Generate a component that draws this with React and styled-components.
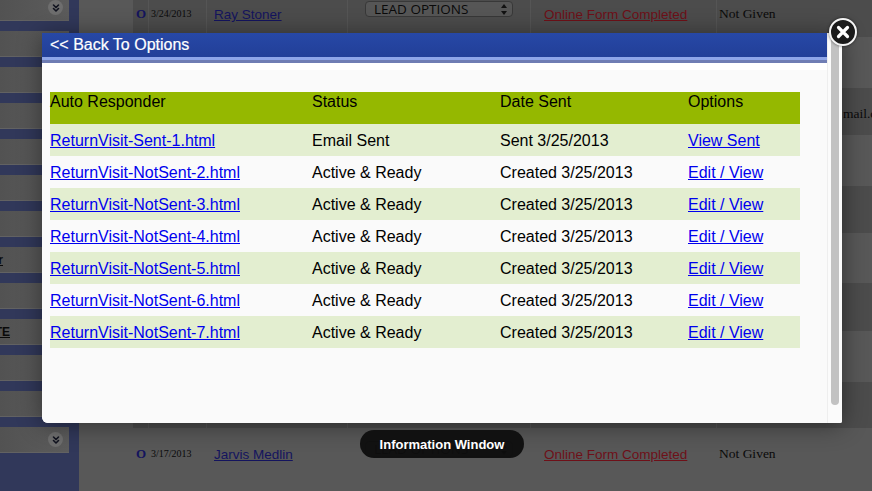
import React from 'react';
import styled, { createGlobalStyle } from 'styled-components';
import { ChevronsDown } from 'lucide-react';

const GlobalStyle = createGlobalStyle`
  html, body {
    margin: 0;
    padding: 0;
    height: 100%;
    overflow: hidden;
    font-family: "Liberation Sans", Arial, sans-serif;
  }
`;

// the page behind the popup is drawn in its dimmed colours
const Page = styled.div`
  position: relative;
  display: flex;
  width: 872px;
  height: 491px;
  overflow: hidden;
  background: #585858;
`;

const Sidebar = styled.div`
  flex: 0 0 79px;
  display: flex;
  flex-direction: column;
  gap: 10px;
  margin-top: -5px;
  padding-right: 10px;
  box-sizing: border-box;
  height: 500px;
  background: #31385a;
`;

const NavItem = styled.div`
  flex: 0 0 25px;
  display: flex;
  align-items: center;
  justify-content: space-between;
  padding-right: 6px;
  background: linear-gradient(to right, #525252, #5c5c5c);
  border-bottom: 1px solid #626262;
`;

const NavLabel = styled.a`
  display: flex;
  justify-content: flex-end;
  width: ${(p) => p.$end}px;
  font-size: 12px;
  font-weight: bold;
  color: #0a0a0a;
  text-decoration: underline;
`;

const NavToggle = styled.span`
  display: flex;
  align-items: center;
  justify-content: center;
  width: 15px;
  height: 15px;
  margin-left: auto;
  border-radius: 50%;
  background: #6e6e6e;
  color: #11131f;
`;

const Main = styled.div`
  flex: 1;
  display: flex;
  flex-direction: column;
  margin-top: -12px;
  padding-left: 54px;
`;

const Row = styled.div`
  flex: 0 0 ${(p) => p.$h}px;
  display: grid;
  grid-template-columns: 15px 57px 140px 182px 185px 1fr;
  column-gap: 1px;
  background: ${(p) => (p.$dark ? '#555555' : 'transparent')};
`;

const Cell = styled.div`
  padding-top: 19px;
  box-sizing: border-box;
  overflow: visible;
  white-space: nowrap;
  background: ${(p) => (p.$dark ? '#4c4c4c' : 'transparent')};
`;

const Marker = styled(Cell)`
  padding-left: 3px;
  font: bold 13px/14px "Liberation Serif", serif;
  color: #14145e;
`;

const DateCell = styled(Cell)`
  padding-left: 2px;
  font: 10px/14px "Liberation Serif", serif;
  color: #0a0a0a;
`;

const NameCell = styled(Cell)`
  padding: 19px 0 0 7px;
  font: 13.5px/16px "Liberation Sans", sans-serif;
`;

const SelectCell = styled(Cell)`
  padding: 13px 0 0 17px;
`;

const LeadSelect = styled.div`
  display: flex;
  align-items: center;
  justify-content: space-between;
  width: 148px;
  height: 16px;
  padding: 0 5px 0 8px;
  box-sizing: border-box;
  border: 1px solid #383838;
  border-radius: 4px;
  font: 13.5px/16px "Open Sans", sans-serif;
  color: #0a0a0a;
  background: #565656;
`;

const StatusCell = styled(Cell)`
  padding: 19px 0 0 13px;
  font: 13.5px/16px "Liberation Sans", sans-serif;
`;

const LastCell = styled(Cell)`
  padding: 18px 0 0 2px;
  font: 13.5px/15px "Liberation Serif", serif;
  color: #0a0a0a;
`;

const EmailText = styled.span`
  margin-left: 124px;
`;

const NameLink = styled.a`
  color: #14145e;
  text-decoration: underline;
`;

const StatusLink = styled.a`
  color: #6e1018;
  text-decoration: underline;
`;

const Modal = styled.div`
  position: absolute;
  left: 42px;
  top: 33px;
  width: 800px;
  height: 390px;
  display: flex;
  background: #fafafa;
  border-radius: 0 0 2px 6px;
  box-shadow: 0 2px 24px rgba(0, 0, 0, 0.45);
  overflow: hidden;
`;

const ModalBody = styled.div`
  flex: 1;
  display: flex;
  flex-direction: column;
`;

const ModalHeader = styled.div`
  height: 24px;
  padding-left: 8px;
  box-sizing: border-box;
  font-size: 16px;
  line-height: 23px;
  color: #fff;
  -webkit-text-stroke: 0.2px #fff;
  background: linear-gradient(to bottom, #2748a6, #223f98);
`;

const HeaderStripe = styled.div`
  height: 6px;
  background: linear-gradient(to bottom, #8ea5e8 50%, #6f7db4 50%);
`;

const Content = styled.div`
  flex: 1;
  padding: 29px 0 0 8px;
  background: linear-gradient(to bottom, #fff 7px, #fafafa 7px);
`;

const Table = styled.table`
  width: 750px;
  border-collapse: collapse;
  table-layout: fixed;
  font-size: 16px;
  color: #000;
`;

const HeadCell = styled.th`
  height: 32px;
  width: ${(p) => p.$w}px;
  padding: 0;
  font-weight: normal;
  text-align: left;
  vertical-align: top;
  line-height: 19px;
  background: #95b800;
`;

const BodyRow = styled.tr`
  background: ${(p) => (p.$alt ? '#e3eed0' : 'transparent')};
`;

const BodyCell = styled.td`
  height: 32px;
  padding: 0;
  line-height: 19px;
`;

const TableLink = styled.a`
  color: #0000ee;
  text-decoration: underline;
`;

const ScrollTrack = styled.div`
  flex: 0 0 15px;
  padding: 0 3px 18px 3px;
  box-sizing: border-box;
  background: #fbfbfb;
  border-left: 1px solid #eee;
`;

const ScrollThumb = styled.div`
  height: 100%;
  border-radius: 0 0 4px 4px;
  background: #c2c2c2;
`;

const CloseButton = styled.button`
  position: absolute;
  left: 829px;
  top: 18px;
  width: 28px;
  height: 28px;
  padding: 0;
  display: flex;
  align-items: center;
  justify-content: center;
  box-sizing: border-box;
  border: 2px solid #f4f4f4;
  border-radius: 50%;
  background: #1b1b1b;
  box-shadow: 0 0 3px rgba(0, 0, 0, 0.6);
`;

const InfoPill = styled.div`
  position: absolute;
  left: 360px;
  top: 430px;
  width: 164px;
  height: 28px;
  display: flex;
  align-items: center;
  justify-content: center;
  border-radius: 14px;
  font-size: 13px;
  font-weight: bold;
  color: #fff;
  background: rgba(14, 14, 14, 0.95);
`;

const navItems = [
  { toggle: true },
  {},
  {},
  {},
  {},
  {},
  {},
  { label: 'r', end: 3 },
  {},
  { label: 'TE', end: 10 },
  {},
  {},
  { toggle: true },
];

const bgRows = [
  { h: 49, dark: true, lead: { date: '3/24/2013', name: 'Ray Stoner' } },
  { h: 51 },
  { h: 47, dark: true, email: true },
  { h: 51 },
  { h: 47, dark: true },
  { h: 50 },
  { h: 48, dark: true },
  { h: 51 },
  { h: 46, dark: true },
  { h: 70, lead: { date: '3/17/2013', name: 'Jarvis Medlin' } },
];

const responders = [
  ['ReturnVisit-Sent-1.html', 'Email Sent', 'Sent 3/25/2013', 'View Sent'],
  ['ReturnVisit-NotSent-2.html', 'Active & Ready', 'Created 3/25/2013', 'Edit / View'],
  ['ReturnVisit-NotSent-3.html', 'Active & Ready', 'Created 3/25/2013', 'Edit / View'],
  ['ReturnVisit-NotSent-4.html', 'Active & Ready', 'Created 3/25/2013', 'Edit / View'],
  ['ReturnVisit-NotSent-5.html', 'Active & Ready', 'Created 3/25/2013', 'Edit / View'],
  ['ReturnVisit-NotSent-6.html', 'Active & Ready', 'Created 3/25/2013', 'Edit / View'],
  ['ReturnVisit-NotSent-7.html', 'Active & Ready', 'Created 3/25/2013', 'Edit / View'],
];

function BackgroundRow({ row }) {
  const { h, dark, lead, email } = row;
  return (
    <Row $h={h} $dark={dark}>
      <Marker $dark={dark}>{lead && 'O'}</Marker>
      <DateCell $dark={dark}>{lead && lead.date}</DateCell>
      <NameCell $dark={dark}>{lead && <NameLink>{lead.name}</NameLink>}</NameCell>
      <SelectCell $dark={dark}>
        {lead && (
          <LeadSelect>
            LEAD OPTIONS
            <svg width="6" height="11" viewBox="0 0 6 11">
              <path d="M3 0 L6 4 H0 Z M3 11 L0 7 H6 Z" fill="#111" />
            </svg>
          </LeadSelect>
        )}
      </SelectCell>
      <StatusCell $dark={dark}>{lead && <StatusLink>Online Form Completed</StatusLink>}</StatusCell>
      <LastCell $dark={dark}>
        {lead && 'Not Given'}
        {email && <EmailText>mail.com</EmailText>}
      </LastCell>
    </Row>
  );
}

export default function App() {
  return (
    <Page>
      <GlobalStyle />
      <Sidebar>
        {navItems.map((item, i) => (
          <NavItem key={i}>
            {item.label && <NavLabel $end={item.end}>{item.label}</NavLabel>}
            {item.toggle && (
              <NavToggle>
                <ChevronsDown size={12} strokeWidth={3.2} />
              </NavToggle>
            )}
          </NavItem>
        ))}
      </Sidebar>
      <Main>
        {bgRows.map((row, i) => (
          <BackgroundRow key={i} row={row} />
        ))}
      </Main>
      <Modal>
        <ModalBody>
          <ModalHeader>{'<< Back To Options'}</ModalHeader>
          <HeaderStripe />
          <Content>
            <Table>
              <thead>
                <tr>
                  <HeadCell $w={262}>Auto Responder</HeadCell>
                  <HeadCell $w={188}>Status</HeadCell>
                  <HeadCell $w={188}>Date Sent</HeadCell>
                  <HeadCell $w={112}>Options</HeadCell>
                </tr>
              </thead>
              <tbody>
                {responders.map(([file, status, date, action], i) => (
                  <BodyRow key={file} $alt={i % 2 === 0}>
                    <BodyCell>
                      <TableLink href="#">{file}</TableLink>
                    </BodyCell>
                    <BodyCell>{status}</BodyCell>
                    <BodyCell>{date}</BodyCell>
                    <BodyCell>
                      <TableLink href="#">{action}</TableLink>
                    </BodyCell>
                  </BodyRow>
                ))}
              </tbody>
            </Table>
          </Content>
        </ModalBody>
        <ScrollTrack>
          <ScrollThumb />
        </ScrollTrack>
      </Modal>
      <CloseButton aria-label="Close">
        <svg width="14" height="14" viewBox="0 0 14 14">
          <path d="M2.5 2.5 L11.5 11.5 M11.5 2.5 L2.5 11.5" stroke="#fff" strokeWidth="3.2" strokeLinecap="round" />
        </svg>
      </CloseButton>
      <InfoPill>Information Window</InfoPill>
    </Page>
  );
}
